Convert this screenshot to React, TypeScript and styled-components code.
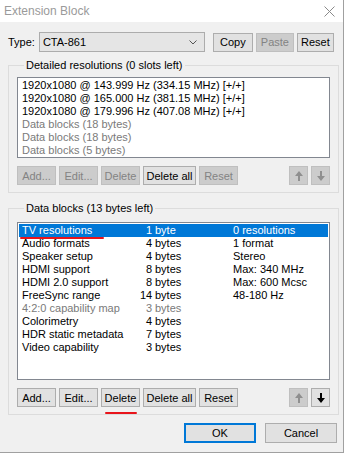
import styled, { createGlobalStyle } from "styled-components";

const GlobalStyle = createGlobalStyle`
  body {
    margin: 0;
    background: #ffffff;
    font-family: "Liberation Sans", Arial, sans-serif;
    font-size: 11px;
  }
`;

const detailed = [
  { text: "1920x1080 @ 143.999 Hz (334.15 MHz) [+/+]", dim: false },
  { text: "1920x1080 @ 165.000 Hz (381.15 MHz) [+/+]", dim: false },
  { text: "1920x1080 @ 179.996 Hz (407.08 MHz) [+/+]", dim: false },
  { text: "Data blocks (18 bytes)", dim: true },
  { text: "Data blocks (18 bytes)", dim: true },
  { text: "Data blocks (5 bytes)", dim: true },
];

const blocks = [
  { name: "TV resolutions", n: 1, unit: "byte", info: "0 resolutions" },
  { name: "Audio formats", n: 4, unit: "bytes", info: "1 format" },
  { name: "Speaker setup", n: 4, unit: "bytes", info: "Stereo" },
  { name: "HDMI support", n: 8, unit: "bytes", info: "Max: 340 MHz" },
  { name: "HDMI 2.0 support", n: 8, unit: "bytes", info: "Max: 600 Mcsc" },
  { name: "FreeSync range", n: 14, unit: "bytes", info: "48-180 Hz" },
  { name: "4:2:0 capability map", n: 3, unit: "bytes", info: "", dim: true },
  { name: "Colorimetry", n: 4, unit: "bytes", info: "" },
  { name: "HDR static metadata", n: 7, unit: "bytes", info: "" },
  { name: "Video capability", n: 3, unit: "bytes", info: "" },
];

const ArrowIcon = ({ down, color }: { down?: boolean; color: string }) => (
  <svg width="8" height="10" viewBox="0 0 8 10">
    <path
      d={down ? "M3 0h2v5h3L4 10 0 5h3z" : "M3 10h2V5h3L4 0 0 5h3z"}
      fill={color}
    />
  </svg>
);

const App = () => {
  return (
    <>
      <GlobalStyle />
      <Dialog>
        <TitleBar>
          <Title>Extension Block</Title>
          <svg width="11" height="11" viewBox="0 0 11 11">
            <path d="M0.5 0.5l10 10M10.5 0.5l-10 10" stroke="#8a8a8a" strokeWidth="1" />
          </svg>
        </TitleBar>
        <Body>
          <TypeRow>
            <span>Type:</span>
            <Combo>
              <span>CTA-861</span>
              <svg width="8" height="5" viewBox="0 0 8 5">
                <path d="M0.5 0.5l3.5 3.5 3.5-3.5" stroke="#555" fill="none" />
              </svg>
            </Combo>
            <Buttons>
              <Button $w={40}>Copy</Button>
              <Button $w={38} disabled>
                Paste
              </Button>
              <Button $w={37}>Reset</Button>
            </Buttons>
          </TypeRow>

          <Group $gap={7} $pad={6}>
            <Legend>Detailed resolutions (0 slots left)</Legend>
            <ListBox $h={81}>
              {detailed.map((d, i) => (
                <Row key={i} $dim={d.dim}>
                  {d.text}
                </Row>
              ))}
            </ListBox>
            <ButtonRow>
              <Button $w={39} disabled>Add...</Button>
              <Button $w={39} disabled>Edit...</Button>
              <Button $w={39} disabled>Delete</Button>
              <Button $w={53}>Delete all</Button>
              <Button $w={39} disabled>Reset</Button>
              <Spacer />
              <Button $w={19} disabled>
                <ArrowIcon color="#8f8f8f" />
              </Button>
              <Button $w={19} disabled>
                <ArrowIcon down color="#8f8f8f" />
              </Button>
            </ButtonRow>
          </Group>

          <Group $gap={9} $pad={8}>
            <Legend>Data blocks (13 bytes left)</Legend>
            <ListBox $h={158}>
              {blocks.map((b, i) => (
                <Row key={i} $dim={b.dim} $selected={i === 0}>
                  <NameCell>{b.name}</NameCell>
                  <SizeNum>{b.n}</SizeNum>
                  <SizeUnit>{b.unit}</SizeUnit>
                  <span>{b.info}</span>
                  {i === 0 && <Underline $left={1} $top={13} $w={84} />}
                </Row>
              ))}
            </ListBox>
            <ButtonRow>
              <Button $w={39}>Add...</Button>
              <Button $w={39}>Edit...</Button>
              <Marked>
                <Button $w={39}>Delete</Button>
                <Underline $left={4} $top={24} $w={32} />
              </Marked>
              <Button $w={53}>Delete all</Button>
              <Button $w={39}>Reset</Button>
              <Spacer />
              <Button $w={19} disabled>
                <ArrowIcon color="#8f8f8f" />
              </Button>
              <Button $w={19}>
                <ArrowIcon down color="#000" />
              </Button>
            </ButtonRow>
          </Group>

          <Footer>
            <Button $w={72} $h={20} $default>
              OK
            </Button>
            <Button $w={72} $h={20}>
              Cancel
            </Button>
          </Footer>
        </Body>
      </Dialog>
    </>
  );
};

export default App;

const Dialog = styled.div`
  width: 343px;
  height: 452px;
  background: #f0f0f0;
  border-right: 1px solid #a0a0a0;
  border-bottom: 1px solid #a0a0a0;
  display: flex;
  flex-direction: column;
`;

const TitleBar = styled.div`
  height: 22px;
  background: #ffffff;
  display: flex;
  align-items: center;
  justify-content: space-between;
  padding: 0 8px 0 4px;
`;

const Title = styled.span`
  color: #9a9a9a;
  font-size: 12px;
`;

const Body = styled.div`
  padding: 10px 5px 0 8px;
  display: flex;
  flex-direction: column;
`;

const TypeRow = styled.div`
  display: flex;
  align-items: center;
  height: 20px;
  gap: 4px;
`;

const Combo = styled.div`
  box-sizing: border-box;
  width: 166px;
  height: 20px;
  margin-left: 0;
  background: #e5e5e5;
  border: 1px solid #acacac;
  display: flex;
  align-items: center;
  justify-content: space-between;
  padding: 0 7px 0 3px;
`;

const Buttons = styled.div`
  display: flex;
  gap: 3px;
  margin-left: 4px;
`;

const Button = styled.button<{ $w: number; $h?: number; $default?: boolean }>`
  box-sizing: border-box;
  width: ${(p) => p.$w}px;
  height: ${(p) => p.$h ?? 19}px;
  padding: 0;
  font-family: "Liberation Sans", Arial, sans-serif;
  font-size: 11px;
  color: #000;
  background: #e1e1e1;
  border: ${(p) => (p.$default ? "2px solid #0078d7" : "1px solid #adadad")};
  display: flex;
  align-items: center;
  justify-content: center;
  &:disabled {
    background: #cccccc;
    border-color: #bfbfbf;
    color: #838383;
  }
`;

const Group = styled.fieldset<{ $gap: number; $pad: number }>`
  box-sizing: border-box;
  width: 331px;
  margin: ${(p) => p.$gap}px 0 0 0;
  padding: ${(p) => p.$pad}px 8px 7px 8px;
  border: 1px solid #dcdcdc;
  display: flex;
  flex-direction: column;
  gap: 8px;
`;

const Legend = styled.legend`
  padding: 0 2px;
  margin-left: 7px;
  font-size: 11px;
  color: #000;
`;

const ListBox = styled.div<{ $h: number }>`
  box-sizing: border-box;
  height: ${(p) => p.$h}px;
  background: #ffffff;
  border: 1px solid #828790;
  padding: 1px;
`;

const Row = styled.div<{ $dim?: boolean; $selected?: boolean }>`
  position: relative;
  height: 13px;
  line-height: 13px;
  padding-left: 3px;
  display: flex;
  white-space: nowrap;
  background: ${(p) => (p.$selected ? "#0078d7" : "transparent")};
  color: ${(p) => (p.$selected ? "#fff" : p.$dim ? "#7a7a7a" : "#000")};
`;

const NameCell = styled.span`
  width: 118px;
`;

const SizeNum = styled.span`
  width: 12px;
  text-align: right;
`;

const SizeUnit = styled.span`
  width: 78px;
  padding-left: 3px;
`;

const Underline = styled.div<{ $left: number; $top: number; $w: number }>`
  position: absolute;
  left: ${(p) => p.$left}px;
  top: ${(p) => p.$top}px;
  width: ${(p) => p.$w}px;
  height: 2px;
  background: #e8141b;
  border-radius: 1px;
`;

const ButtonRow = styled.div`
  display: flex;
  gap: 3px;
`;

const Marked = styled.div`
  position: relative;
`;

const Spacer = styled.div`
  flex: 1;
`;

const Footer = styled.div`
  display: flex;
  justify-content: flex-end;
  gap: 9px;
  margin-top: 8px;
  padding-right: 1px;
`;
